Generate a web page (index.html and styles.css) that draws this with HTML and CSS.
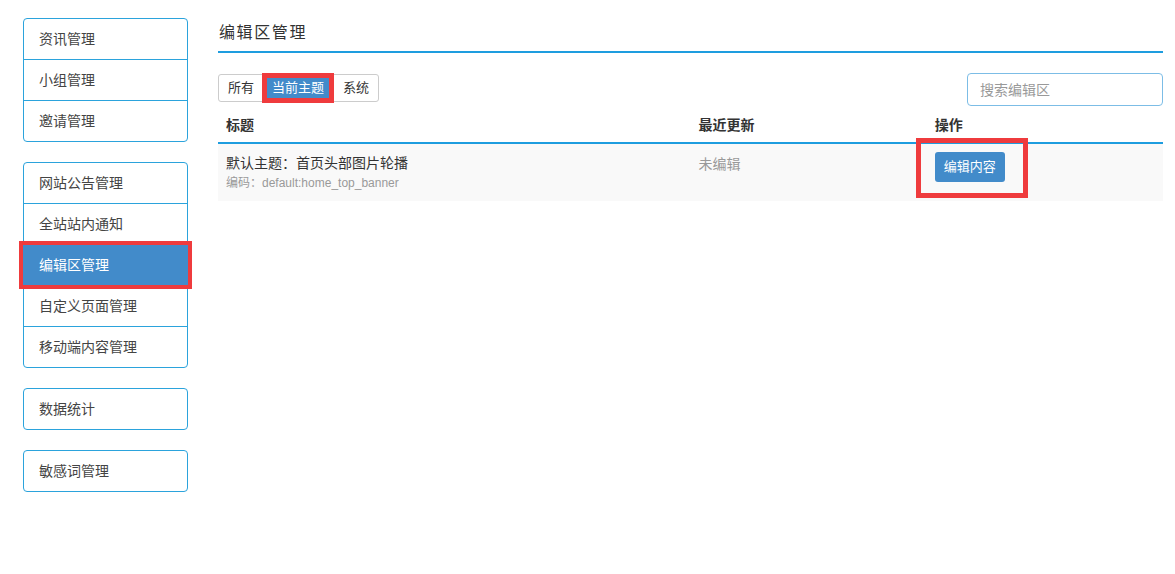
FILE: index.html
```html
<!DOCTYPE html>
<html lang="zh-CN">
<head>
    <meta charset="UTF-8">
    <title>编辑区管理</title>
    <link rel="stylesheet" href="styles.css">
</head>
<body>
    <div class="page">
        <div class="sidebar">
            <ul class="menu">
                <li><a href="#">资讯管理</a></li>
                <li><a href="#">小组管理</a></li>
                <li><a href="#">邀请管理</a></li>
            </ul>
            <ul class="menu">
                <li><a href="#">网站公告管理</a></li>
                <li><a href="#">全站站内通知</a></li>
                <li class="active"><a href="#">编辑区管理</a></li>
                <li><a href="#">自定义页面管理</a></li>
                <li><a href="#">移动端内容管理</a></li>
            </ul>
            <ul class="menu">
                <li><a href="#">数据统计</a></li>
            </ul>
            <ul class="menu">
                <li><a href="#">敏感词管理</a></li>
            </ul>
        </div>

        <div class="main">
            <h1 class="page-title">编辑区管理</h1>

            <div class="toolbar">
                <div class="btn-group">
                    <a href="#" class="tab">所有</a>
                    <a href="#" class="tab current">当前主题</a>
                    <a href="#" class="tab">系统</a>
                </div>
                <input type="text" class="search" placeholder="搜索编辑区">
            </div>

            <table class="list">
                <thead>
                    <tr>
                        <th class="col-title">标题</th>
                        <th class="col-time">最近更新</th>
                        <th class="col-op">操作</th>
                    </tr>
                </thead>
                <tbody>
                    <tr>
                        <td>
                            <div class="block-name">默认主题：首页头部图片轮播</div>
                            <div class="block-code">编码：default:home_top_banner</div>
                        </td>
                        <td class="muted">未编辑</td>
                        <td class="op-cell">
                            <span class="mark"><a href="#" class="btn-edit">编辑内容</a></span>
                        </td>
                    </tr>
                </tbody>
            </table>
        </div>
    </div>
</body>
</html>
```

FILE: styles.css
```css
body {
    margin: 0;
    font-family: "Liberation Sans", "Noto Sans CJK SC", sans-serif;
    font-size: 14px;
    color: #333;
    background: #fff;
}

a {
    text-decoration: none;
}

.page {
    display: flex;
    padding: 18px 12px 0 23px;
}

.sidebar {
    width: 165px;
    flex-shrink: 0;
}

.menu {
    list-style: none;
    margin: 0 0 20px 0;
    padding: 0;
    border: 1px solid #2ba3dc;
    border-radius: 4px;
}

.menu li {
    border-top: 1px solid #2ba3dc;
}

.menu li:first-child {
    border-top: none;
}

.menu li a {
    display: block;
    height: 40px;
    line-height: 40px;
    padding-left: 15px;
    color: #444;
}

.menu li.active a {
    background: #428bca;
    color: #fff;
    margin: 0 -1px;
    padding-left: 16px;
    outline: 4px solid #ef3b3d;
    position: relative;
}

.main {
    flex: 1;
    margin-left: 30px;
}

.page-title {
    margin: 0;
    font-size: 16px;
    font-weight: normal;
    letter-spacing: 1.6px;
    line-height: 24px;
    color: #333;
    padding: 3px 0 6px 1px;
    border-bottom: 2px solid #1e9ddf;
}

.toolbar {
    display: flex;
    justify-content: space-between;
    align-items: flex-start;
    margin-top: 20px;
}

.btn-group {
    display: flex;
    margin-top: 1px;
    border: 1px solid #ccc;
    border-radius: 3px;
    height: 26px;
}

.tab {
    display: block;
    padding: 0 9px;
    line-height: 26px;
    font-size: 13px;
    color: #333;
}

.tab.current {
    background: #428bca;
    color: #fff;
    line-height: 20px;
    height: 20px;
    margin: 3px 5px 0 4px;
    padding: 0 5px;
    outline: 5px solid #ef3b3d;
}

.search {
    width: 196px;
    height: 33px;
    box-sizing: border-box;
    border: 1px solid #7cbde6;
    border-radius: 4px;
    padding: 0 12px;
    font-family: inherit;
    font-size: 14px;
    color: #555;
}

.search::placeholder {
    color: #999;
}

.list {
    width: 100%;
    border-collapse: collapse;
    margin-top: 0;
}

.list th {
    text-align: left;
    font-weight: bold;
    color: #333;
    padding: 8px;
    height: 18px;
    border-bottom: 2px solid #1e9ddf;
}

.col-title {
    width: 50%;
}

.col-time,
.col-op {
    width: 25%;
}

.list td {
    background: #f9f9f9;
    vertical-align: top;
    padding: 9px 8px 8px;
}

.block-name {
    color: #333;
    line-height: 20px;
}

.block-code {
    font-size: 12px;
    color: #999;
    line-height: 20px;
}

.muted {
    color: #999;
}

.list td.op-cell {
    padding-top: 8px;
}

.mark {
    display: inline-block;
    position: relative;
}

/* annotation box round the button */
.mark::after {
    content: "";
    position: absolute;
    top: -14px;
    left: -19px;
    right: -23px;
    bottom: -16px;
    border: 5px solid #ef3b3d;
    pointer-events: none;
}

.btn-edit {
    display: inline-block;
    background: #428bca;
    color: #fff;
    font-size: 13px;
    height: 30px;
    line-height: 30px;
    padding: 0 9px;
    border-radius: 3px;
}
```
